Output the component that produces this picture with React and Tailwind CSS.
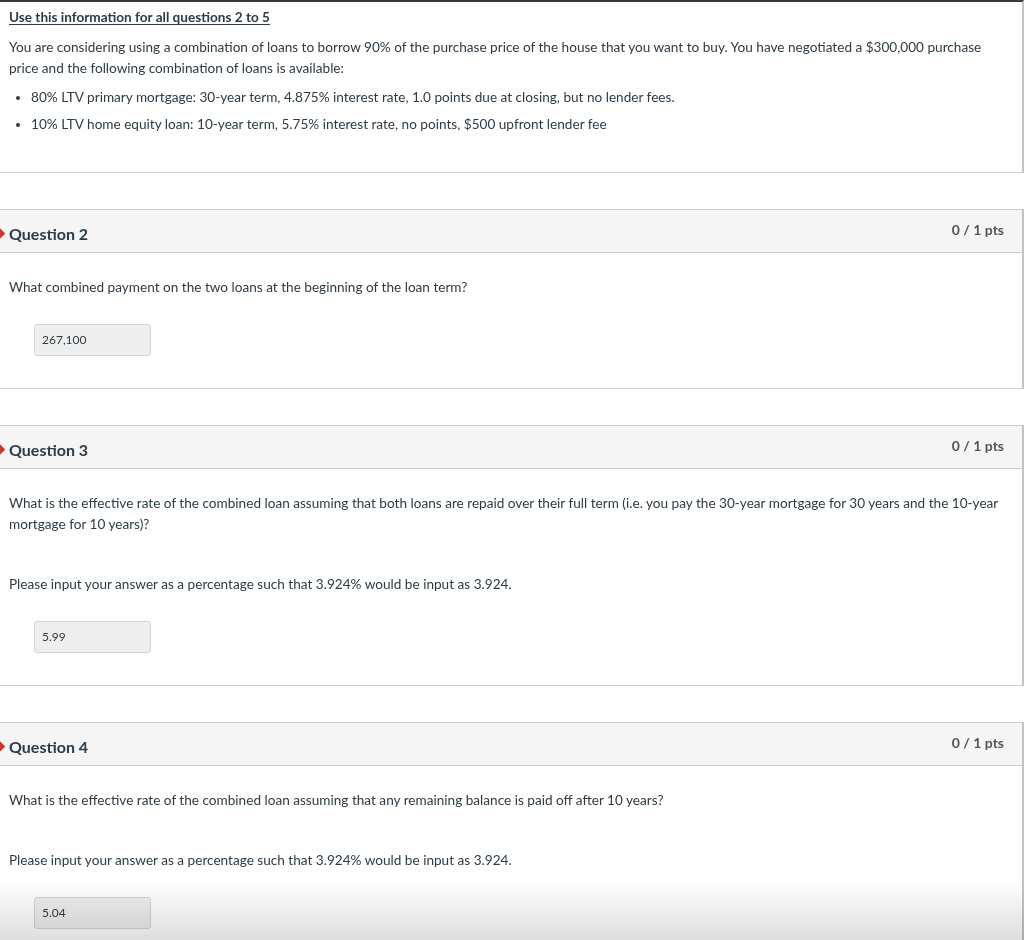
import React from "react";

const questions = [
  {
    id: 2,
    pts: "0 / 1 pts",
    body: [
      "What combined payment on the two loans at the beginning of the loan term?",
    ],
    answer: "267,100",
  },
  {
    id: 3,
    pts: "0 / 1 pts",
    body: [
      "What is the effective rate of the combined loan assuming that both loans are repaid over their full term (i.e. you pay the 30-year mortgage for 30 years and the 10-year mortgage for 10 years)?",
      "Please input your answer as a percentage such that 3.924% would be input as 3.924.",
    ],
    answer: "5.99",
  },
  {
    id: 4,
    pts: "0 / 1 pts",
    body: [
      "What is the effective rate of the combined loan assuming that any remaining balance is paid off after 10 years?",
      "Please input your answer as a percentage such that 3.924% would be input as 3.924.",
    ],
    answer: "5.04",
  },
];

const QuestionCard = ({ q }) => (
  <div className="relative mt-[36px] border-t border-b border-r-2 border-[#c7cdd1] border-r-[#c4c4c4] bg-white">
    {/* incorrect marker */}
    <div className="absolute left-[-8px] top-[18px] h-[11px] w-[11px] rotate-45 bg-[#d0372c]"></div>
    <div className="flex h-[43px] items-center justify-between border-b border-[#c7cdd1] bg-[#f5f5f5] pl-[9px] pr-[18px]">
      <h2 className="mt-[5px] text-[16px] font-bold text-[#2d3b45]">Question {q.id}</h2>
      <span className="mb-[4px] text-[14px] font-bold text-[#555]">{q.pts}</span>
    </div>
    <div className="px-[9px] pt-[24px] pb-[32px]">
      {q.body.map((p, i) => (
        <p key={i} className={`text-[13.6px] leading-[21px] text-[#2d3b45] ${i > 0 ? "mt-[39px]" : ""}`}>
          {p}
        </p>
      ))}
      <div className="ml-[25px] mt-[26px] flex h-[32px] w-[117px] items-center rounded-[3px] border border-[#d4d4d4] bg-[#eeeeee] px-[7px] text-[12px] text-[#2d3b45]">
        {q.answer}
      </div>
    </div>
  </div>
);

const App = () => {
  return (
    <div className="relative h-[940px] w-[1024px] overflow-hidden bg-white font-['Lato','Liberation_Sans',sans-serif]">
      <div className="border-t-2 border-b border-r-2 border-t-[#3a3a3a] border-b-[#c7cdd1] border-r-[#c4c4c4] pb-[37px] pl-[9px] pr-[20px] pt-[5px] w-[1024px]">
        <p className="text-[13.6px] font-bold leading-[21px] text-[#2d3b45] underline underline-offset-2">
          Use this information for all questions 2 to 5
        </p>
        <p className="mt-[9px] text-[13.6px] leading-[21px] text-[#2d3b45]">
          You are considering using a combination of loans to borrow 90% of the purchase price of the house that you want to buy. You have negotiated a $300,000 purchase price and the following combination of loans is available:
        </p>
        <ul className="mt-[8px] list-disc pl-[22px] text-[13.6px] leading-[21px] text-[#2d3b45]">
          <li>80% LTV primary mortgage: 30-year term, 4.875% interest rate, 1.0 points due at closing, but no lender fees.</li>
          <li className="mt-[6px]">10% LTV home equity loan: 10-year term, 5.75% interest rate, no points, $500 upfront lender fee</li>
        </ul>
      </div>
      {questions.map((q) => (
        <QuestionCard key={q.id} q={q} />
      ))}
      <div className="pointer-events-none absolute bottom-0 left-0 h-[60px] w-full bg-gradient-to-b from-white to-[#dedede] mix-blend-multiply"></div>
    </div>
  );
};

export default App;
